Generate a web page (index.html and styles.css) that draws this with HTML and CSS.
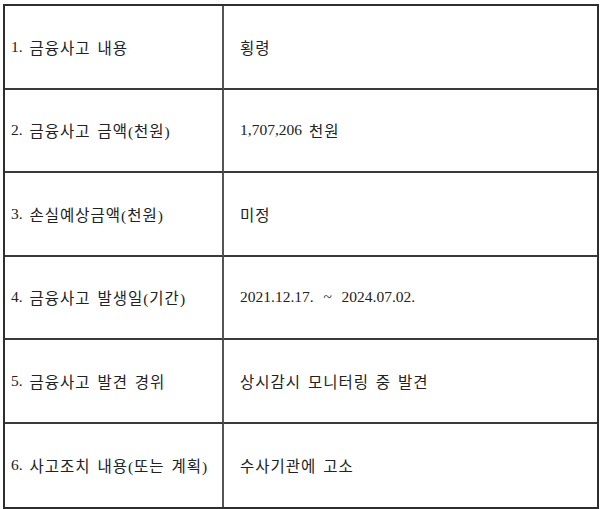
FILE: index.html
```html
<!DOCTYPE html>
<html lang="ko">
<head>
<meta charset="utf-8">
<title>금융사고</title>
<link rel="stylesheet" href="styles.css">
</head>
<body>
<div class="table">
  <div class="cell label"><span class="num">1.</span> 금융사고 내용</div>
  <div class="cell value">횡령</div>
  <div class="cell label"><span class="num">2.</span> 금융사고 금액(천원)</div>
  <div class="cell value"><span class="num">1,707,206</span> 천원</div>
  <div class="cell label"><span class="num">3.</span> 손실예상금액(천원)</div>
  <div class="cell value">미정</div>
  <div class="cell label"><span class="num">4.</span> 금융사고 발생일(기간)</div>
  <div class="cell value"><span class="num">2021.12.17.  ~  2024.07.02.</span></div>
  <div class="cell label"><span class="num">5.</span> 금융사고 발견 경위</div>
  <div class="cell value">상시감시 모니터링 중 발견</div>
  <div class="cell label last"><span class="num">6.</span> 사고조치 내용(또는 계획)</div>
  <div class="cell value last">수사기관에 고소</div>
</div>
</body>
</html>
```
FILE: styles.css
```css
html, body {
  margin: 0;
  padding: 0;
  background: #ffffff;
}

body {
  padding: 4px 0 0 3px;
}

.table {
  box-sizing: border-box;
  width: 596px;
  height: 505px;
  display: grid;
  grid-template-columns: 219px 1fr;
  grid-template-rows: repeat(6, 1fr);
  border: 2px solid #2e2e2e;
  font-family: "Liberation Serif", "Noto Sans CJK KR", serif;
  font-size: 15.5px;
  color: #222222;
}

.cell {
  display: flex;
  align-items: center;
  border-bottom: 2px solid #3a3a3a;
  white-space: pre;
  letter-spacing: 1px;
  word-spacing: 2px;
}

.cell.last {
  border-bottom: none;
}

.num {
  font-size: 15.5px;
  letter-spacing: 0;
  word-spacing: 1px;
}

.label {
  padding-left: 6px;
  border-right: 2px solid #555555;
}

.value {
  padding-left: 16px;
}
```
